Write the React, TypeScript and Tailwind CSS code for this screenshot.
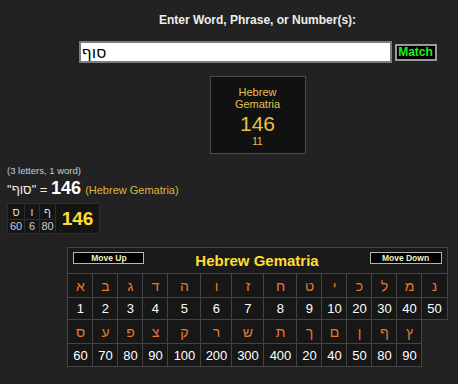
import React from "react";

const r1L = ["א", "ב", "ג", "ד", "ה", "ו", "ז", "ח", "ט", "י", "כ", "ל", "מ", "נ"];
const r1N = ["1", "2", "3", "4", "5", "6", "7", "8", "9", "10", "20", "30", "40", "50"];
const r3L = ["ס", "ע", "פ", "צ", "ק", "ר", "ש", "ת", "ך", "ם", "ן", "ף", "ץ"];
const r3N = ["60", "70", "80", "90", "100", "200", "300", "400", "20", "40", "50", "80", "90"];

const cell = "border border-[#444] bg-[#171717] text-center p-0";
const mini = "border border-[#2e2e2e] bg-[#141414] p-0 text-center text-[11px]";

export default function App() {
  return (
    <div className="min-h-[384px] w-full overflow-hidden bg-[#222222] text-white font-['Liberation_Sans',Arial,sans-serif]">
      <div className="flex flex-col items-center pl-[57px]">
        <div className="mt-[13px] text-[12px] font-bold leading-[14px] text-[#eeeeee]">
          Enter Word, Phrase, or Number(s):
        </div>
        <div className="mt-[14px] flex items-center gap-[3px]">
          <input
            readOnly
            value="סוף"
            className="box-border h-[22px] w-[313px] border-2 border-[#7c7c7c] bg-white px-[1px] text-[16px] leading-[18px] text-black outline-none font-['DejaVu_Sans',sans-serif]"
          />
          <div className="box-border flex h-[17px] w-[42px] items-center justify-center border-2 border-[#9a9a9a] bg-black text-[12px] font-bold leading-[13px] text-[#22ee22]">
            Match
          </div>
        </div>
        <div className="mt-[13px] box-border flex h-[78px] w-[96px] flex-col items-center border border-[#4a4a4a] bg-[#111111] pt-[9px] text-[#e6c24a]">
          <div className="text-[11px] leading-[12px]">Hebrew</div>
          <div className="text-[11px] leading-[12px]">Gematria</div>
          <div className="mt-[2px] text-[21px] leading-[24px]">146</div>
          <div className="text-[10px] leading-[12px]">11</div>
        </div>
      </div>

      <div className="pl-[7px]">
        <div className="mt-[11px] text-[9.5px] leading-[12px] text-[#cccccc]">(3 letters, 1 word)</div>
        <div className="mt-[1px] flex items-baseline leading-[20px]">
          <span className="text-[13px] text-[#eeeeee]">
            "<bdi>סוף</bdi>" =&nbsp;
          </span>
          <span className="text-[18px] font-bold text-white">146</span>
          <span className="ml-[4px] text-[11px] text-[#d9b83a]">(Hebrew Gematria)</span>
        </div>
        <table className="mt-[3px] border-collapse table-fixed w-[92px]">
          <colgroup>
            <col className="w-[17px]" />
            <col className="w-[15px]" />
            <col className="w-[16px]" />
            <col className="w-[44px]" />
          </colgroup>
          <tbody>
            <tr className="h-[16px]">
              <td className={`${mini} leading-[14px] text-[#dddddd]`}>ס</td>
              <td className={`${mini} leading-[14px] text-[#dddddd]`}>ו</td>
              <td className={`${mini} leading-[14px] text-[#dddddd]`}>ף</td>
              <td rowSpan={2} className="border border-[#2e2e2e] bg-[#141414] p-0 text-center text-[19px] font-bold leading-[20px] text-[#ffdd33]">
                146
              </td>
            </tr>
            <tr className="h-[14px]">
              <td className={`${mini} leading-[13px] text-[#cccccc]`}>60</td>
              <td className={`${mini} leading-[13px] text-[#cccccc]`}>6</td>
              <td className={`${mini} leading-[13px] text-[#cccccc]`}>80</td>
            </tr>
          </tbody>
        </table>
      </div>

      <div className="flex flex-col items-center pl-[57px]">
        <table className="mt-[13px] border-collapse table-fixed w-[379px]">
          <colgroup>
            <col className="w-[25px]" />
            <col className="w-[25px]" />
            <col className="w-[25px]" />
            <col className="w-[25px]" />
            <col className="w-[33px]" />
            <col className="w-[31px]" />
            <col className="w-[32px]" />
            <col className="w-[33px]" />
            <col className="w-[25px]" />
            <col className="w-[25px]" />
            <col className="w-[25px]" />
            <col className="w-[25px]" />
            <col className="w-[25px]" />
            <col className="w-[25px]" />
          </colgroup>
          <tbody>
            <tr className="h-[26px]">
              <td colSpan={14} className="border border-[#444] bg-[#1a1a1a] p-0">
                <div className="flex h-[25px] items-start justify-between px-[5px] pt-[4px]">
                  <div className="box-border flex h-[12px] w-[71px] items-center justify-center border border-[#b5b5b5] bg-black text-[8.5px] font-bold leading-[10px] text-[#f2f2c0]">
                    Move Up
                  </div>
                  <div className="text-[15px] font-bold leading-[18px] text-[#ffdd33]">Hebrew Gematria</div>
                  <div className="box-border flex h-[12px] w-[72px] items-center justify-center border border-[#b5b5b5] bg-black text-[8.5px] font-bold leading-[10px] text-[#f2f2c0]">
                    Move Down
                  </div>
                </div>
              </td>
            </tr>
            <tr className="h-[24px]">
              {r1L.map((l, i) => (
                <td key={i} className={`${cell} text-[14px] leading-[16px] text-[#e8782e]`}>{l}</td>
              ))}
            </tr>
            <tr className="h-[22px]">
              {r1N.map((n, i) => (
                <td key={i} className={`${cell} text-[13px] leading-[15px] text-white`}>{n}</td>
              ))}
            </tr>
            <tr className="h-[24px]">
              {r3L.map((l, i) => (
                <td key={i} className={`${cell} text-[14px] leading-[16px] text-[#e8782e]`}>{l}</td>
              ))}
            </tr>
            <tr className="h-[23px]">
              {r3N.map((n, i) => (
                <td key={i} className={`${cell} text-[13px] leading-[15px] text-white`}>{n}</td>
              ))}
            </tr>
          </tbody>
        </table>
      </div>
    </div>
  );
}
